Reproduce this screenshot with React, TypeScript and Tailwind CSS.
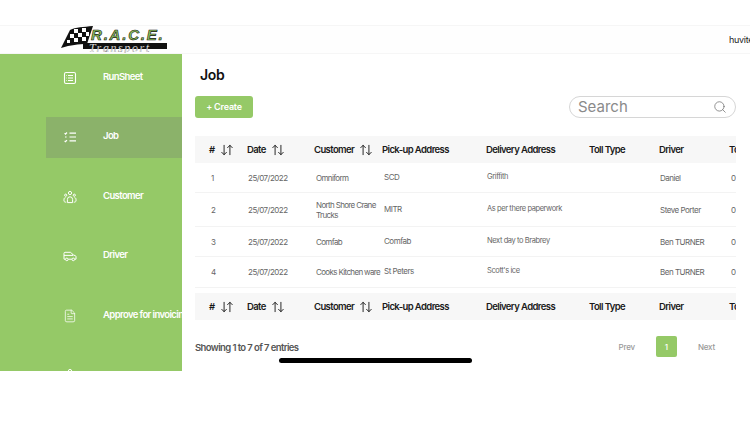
import { ArrowDownUp, ArrowUpDown, FileText, Search } from 'lucide-react'
import type { ReactNode } from 'react'

const cols = 'grid grid-cols-[52px_67px_68px_104px_103px_70px_70px_40px]'

const rows = [
  { id: 1, date: '25/07/2022', customer: 'Omniform', pickup: 'SCD', delivery: 'Griffith', driver: 'Daniel', toll: '0', h: 'h-[30px]' },
  { id: 2, date: '25/07/2022', customer: 'North Shore Crane Trucks', pickup: 'MITR', delivery: 'As per there paperwork', driver: 'Steve Porter', toll: '0', h: 'h-[34px]' },
  { id: 3, date: '25/07/2022', customer: 'Comfab', pickup: 'Comfab', delivery: 'Next day to Brabrey', driver: 'Ben TURNER', toll: '0', h: 'h-[30px]' },
  { id: 4, date: '25/07/2022', customer: 'Cooks\u00a0Kitchen\u00a0ware', pickup: 'St Peters', delivery: "Scott's ice", driver: 'Ben TURNER', toll: '0', h: 'h-[31px]' },
]

function SheetIcon() {
  return (
    <svg width="14" height="14" viewBox="0 0 14 14" fill="none" stroke="currentColor" strokeWidth="1.1">
      <rect x="1.5" y="1.5" width="11" height="11" rx="1.5" />
      <path d="M5 4.5h5M5 7h5M5 9.5h5M3.2 4.5h.6M3.2 7h.6M3.2 9.5h.6" />
    </svg>
  )
}

function ChecklistIcon() {
  return (
    <svg width="14" height="14" viewBox="0 0 14 14" fill="none" stroke="currentColor" strokeWidth="1.2">
      <path d="M6.5 3.2H13M6.5 7H13M6.5 10.8H13" />
      <path d="M1.6 3.2l.9.9 1.5-1.6M1.6 10.8l.9.9 1.5-1.6M2 7h1.6" />
    </svg>
  )
}

function PeopleIcon() {
  return (
    <svg width="14" height="14" viewBox="0 0 14 14" fill="none" stroke="currentColor" strokeWidth="1">
      <circle cx="7" cy="3" r="1.6" />
      <circle cx="2.7" cy="5.2" r="1.1" />
      <circle cx="11.3" cy="5.2" r="1.1" />
      <path d="M4.4 12.6V9.4a2.6 2.6 0 0 1 5.2 0v3.2zM3.2 12.2c-1.2 0-2.2-.4-2.2-1.3V9.2c0-.9.6-1.5 1.6-1.5M10.8 12.2c1.2 0 2.2-.4 2.2-1.3V9.2c0-.9-.6-1.5-1.6-1.5" />
    </svg>
  )
}

function VanIcon() {
  return (
    <svg width="14" height="14" viewBox="0 0 14 14" fill="none" stroke="currentColor" strokeWidth="1">
      <path d="M1 10.2V4.3c0-.6.4-1 1-1h5.2c.5 0 .9.2 1.2.6L10.2 6l2.1.6c.4.2.7.5.7 1v2.6h-1.3M1 10.2h1.4M5.2 10.2h3.7M1 6.4h9" />
      <circle cx="3.8" cy="10.4" r="1.3" />
      <circle cx="10.3" cy="10.4" r="1.3" />
    </svg>
  )
}

function NavItem({ icon, label, active }: { icon: ReactNode; label?: string; active?: boolean }) {
  return (
    <div className={`flex h-[41px] shrink-0 items-center whitespace-nowrap pl-[17px] text-white ${active ? 'bg-[#8bb26a]' : ''}`}>
      <span className="w-[40px] shrink-0">{icon}</span>
      {label && <span className="relative -top-[0.5px] text-[9.5px] font-semibold tracking-[-0.6px]">{label}</span>}
    </div>
  )
}

function Th({ label, sort }: { label: string; sort?: 'up' | 'down' }) {
  return (
    <div className="flex items-center gap-[5px] whitespace-nowrap">
      <span>{label}</span>
      {sort === 'down' && <ArrowDownUp size={14} strokeWidth={1.6} />}
      {sort === 'up' && <ArrowUpDown size={14} strokeWidth={1.6} />}
    </div>
  )
}

function HeadRow({ className }: { className: string }) {
  return (
    <div className={`${cols} ${className} items-center bg-[#f7f7f7] pt-px text-[9.5px] font-semibold tracking-[-0.6px] text-[#1a1a1a]`}>
      <div className="pl-[14px]">
        <Th label="#" sort="down" />
      </div>
      <Th label="Date" sort="up" />
      <Th label="Customer" sort="up" />
      <Th label="Pick-up Address" />
      <Th label="Delivery Address" />
      <Th label="Toll Type" />
      <Th label="Driver" />
      <Th label="To" />
    </div>
  )
}

function Logo() {
  return (
    <div className="relative h-[27px] w-[106px] self-start">
      <svg className="absolute left-0 top-0" width="32" height="23" viewBox="0 0 32 23">
        <path d="M0 22 9 4c6-3 13-3 23-4l-6 18c-9 0-16 1-26 4z" fill="#111" />
        <path d="M13 3h4v4h-4zM21 2h4v4h-4zM9 8h4v4H9zM17 7h4v4h-4zM25 6h3v4h-3zM13 12h4v4h-4zM21 11h4v4h-4zM6 14h3v3H6z" fill="#fff" />
      </svg>
      <span className="absolute left-[30px] top-[1px] whitespace-nowrap font-['Liberation_Sans',sans-serif] text-[15px] font-bold italic leading-none tracking-[1.8px] text-[#8dc35d] [-webkit-text-stroke:0.6px_#111]">
        R.A.C.E.
      </span>
      <div className="absolute left-[22px] top-[17px] h-[6px] w-[84px] bg-[#111]" />
      <span className="absolute left-[28px] top-[17px] whitespace-nowrap font-['Liberation_Serif',serif] text-[12px] italic leading-[10px] tracking-[1.6px] text-white [-webkit-text-stroke:0.2px_#111]">
        Transport
      </span>
    </div>
  )
}

export default function App() {
  return (
    <div className="relative h-[422px] w-[750px] overflow-hidden bg-white font-['Inter',sans-serif]">
      <div className="h-[371px] overflow-hidden pt-[25px]">
        <header className="flex h-[29px] items-center justify-between overflow-hidden border-y border-[#f6f6f6] bg-[#fefefe] pl-[61px]">
          <Logo />
          <span className="w-[21px] overflow-hidden whitespace-nowrap text-[9px] tracking-[-0.3px] text-[#222]">huvite</span>
        </header>

        <div className="flex h-[317px]">
          <aside className="w-[182px] shrink-0 overflow-hidden bg-[#95c967] pl-[46px] pt-[3px]">
            <div className="flex flex-col gap-[18.5px]">
              <NavItem icon={<SheetIcon />} label="RunSheet" />
              <NavItem icon={<ChecklistIcon />} label="Job" active />
              <NavItem icon={<PeopleIcon />} label="Customer" />
              <NavItem icon={<VanIcon />} label="Driver" />
              <NavItem icon={<FileText size={14} strokeWidth={1.3} />} label="Approve for invoicing" />
              <NavItem icon={<PeopleIcon />} />
            </div>
          </aside>

          <main className="w-[554px] pl-[13px]">
            <h1 className="pt-[12px] pl-[5px] text-[14px] font-semibold leading-[18px] tracking-[-0.3px] text-[#111]">Job</h1>
            <div className="mt-[12px] flex h-[22px] items-center justify-between">
              <button className="h-[22px] w-[58px] rounded-[3px] bg-[#95c967] text-[9px] font-semibold tracking-[-0.2px] text-white">+ Create</button>
              <div className="flex h-[22px] w-[167px] items-center justify-between rounded-full border border-[#d6d6d6] pl-[8px] pr-[8px]">
                <span className="text-[15px] text-[#8a8a8a]">Search</span>
                <Search size={14} strokeWidth={1.2} className="text-[#666]" />
              </div>
            </div>

            <div className="mt-[18px] w-[541px] overflow-hidden">
              <HeadRow className="h-[27px]" />
              {rows.map((r) => (
                <div key={r.id} className={`${cols} ${r.h} items-center border-b border-[#f3f3f3] text-[8px] leading-[10px] tracking-[-0.5px] text-[#666]`}>
                  <div className="pl-[16px]">{r.id}</div>
                  <div className="pl-[1px]">{r.date}</div>
                  <div className="pl-[2px] tracking-[-0.65px]">{r.customer}</div>
                  <div className="relative -top-px pl-[2px]">{r.pickup}</div>
                  <div className="relative -top-px pl-[1px] text-[7.5px] tracking-[-0.4px]">{r.delivery}</div>
                  <div />
                  <div className="pl-[1px]">{r.driver}</div>
                  <div className="pl-[2px]">{r.toll}</div>
                </div>
              ))}
              <HeadRow className="mt-[5px] h-[27px]" />
            </div>

            <div className="mt-[16px] flex w-[541px] items-center justify-between">
              <span className="relative top-[1.5px] text-[9.5px] font-semibold tracking-[-0.6px] text-[#555]">Showing 1 to 7 of 7 entries</span>
              <div className="flex items-center pr-[21px] text-[8px] font-medium tracking-[-0.2px] text-[#999]">
                <span>Prev</span>
                <span className="ml-[21px] flex h-[21px] w-[21px] items-center justify-center rounded-[2px] bg-[#95c967] text-white">1</span>
                <span className="ml-[21px]">Next</span>
              </div>
            </div>
          </main>
        </div>
      </div>
      <div className="absolute left-[279px] top-[358px] h-[5px] w-[193px] rounded-full bg-black" />
    </div>
  )
}
